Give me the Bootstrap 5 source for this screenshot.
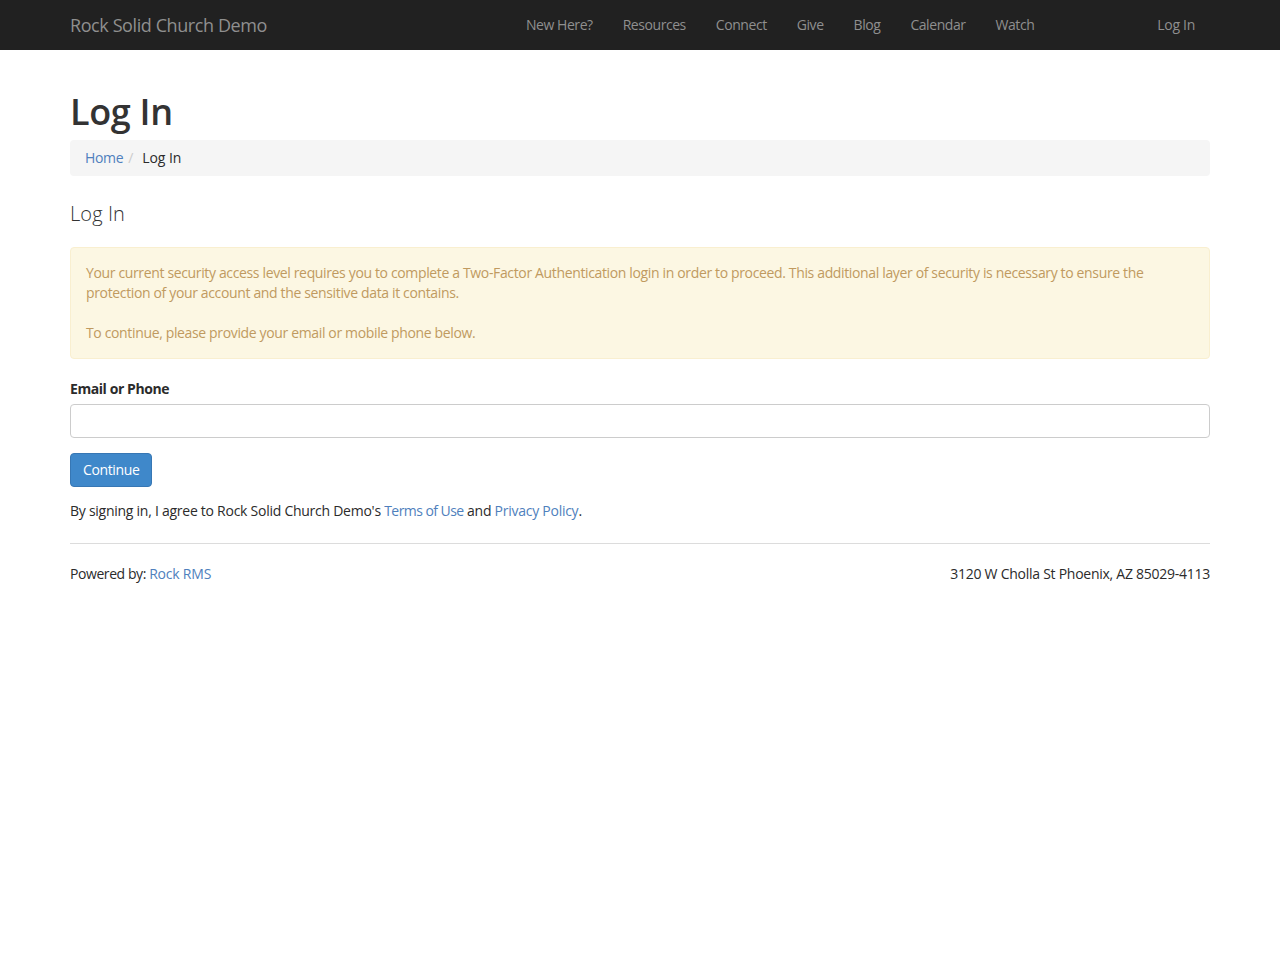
<!DOCTYPE html>
<html lang="en">
<head>
<meta charset="utf-8">
<title>Log In</title>
<link href="https://cdn.jsdelivr.net/npm/bootstrap@5.3.0/dist/css/bootstrap.min.css" rel="stylesheet">
<style>
body { font-family: "Open Sans", sans-serif; font-size: 14px; line-height: 20px; letter-spacing: -0.34px; color: #2b2b2b; background: #fff; }
a { text-decoration: none; color: #4f7fbd; }
.top-bar { background: #212121; height: 50px; padding: 0 70px; }
.top-brand { font-size: 18px; letter-spacing: -0.41px; color: #8f8f8f; font-weight: 400; }
.top-link { color: #8f8f8f; padding: 15px; line-height: 20px; letter-spacing: -0.44px; }
.top-menu { margin-left: 244px; }
.top-login { letter-spacing: -0.3px; }
.page-wrap { padding: 0 70px; }
.page-heading { font-size: 36px; line-height: 40px; font-weight: 600; color: #333; margin: 42px 0 8px; }
.trail { background: #f5f5f5; border-radius: 4px; height: 36px; padding: 8px 15px; }
.trail-sep { color: #ccc; padding: 0 5px; margin-right: 1px; }
.trail-now { letter-spacing: -0.1px; }
.block-title { font-size: 20px; line-height: 22px; letter-spacing: 0.1px; font-weight: 300; color: #333; margin: 27px 0 22px; }
.warn-box { background: #fcf7e3; border: 1px solid #f9efd0; border-radius: 4px; color: #c09a60; padding: 15px; height: 112px; margin-bottom: 20px; letter-spacing: -0.355px; }
.field-label { font-weight: 700; font-size: 14px; line-height: 20px; letter-spacing: -0.43px; margin-bottom: 5px; display: block; color: #2b2b2b; }
.field-box { height: 34px; border: 1px solid #ccc; border-radius: 4px; font-size: 14px; padding: 6px 12px; box-shadow: none; }
.go-btn { background: #3f88ca; border: 1px solid #3777b4; color: #fff; font-size: 14px; line-height: 20px; letter-spacing: -0.37px; padding: 6px 12px; border-radius: 4px; margin-top: 15px; }
.terms-line { margin: 14px 0 22px; letter-spacing: -0.26px; }
.terms-link { letter-spacing: -0.55px; }
.foot-rule { border: 0; border-top: 1px solid #dcdcdc; margin: 0 0 20px; opacity: 1; }
.foot-power { letter-spacing: -0.42px; }
.foot-link { letter-spacing: -0.22px; }
.foot-addr { letter-spacing: -0.26px; }
</style>
</head>
<body>
<nav class="top-bar d-flex align-items-center">
  <a class="top-brand" href="#">Rock Solid Church Demo</a>
  <div class="top-menu d-flex">
    <a class="top-link" href="#">New Here?</a>
    <a class="top-link" href="#">Resources</a>
    <a class="top-link" href="#">Connect</a>
    <a class="top-link" href="#">Give</a>
    <a class="top-link" href="#">Blog</a>
    <a class="top-link" href="#">Calendar</a>
    <a class="top-link" href="#">Watch</a>
  </div>
  <a class="top-link top-login ms-auto" href="#">Log In</a>
</nav>
<main class="page-wrap">
  <h1 class="page-heading">Log In</h1>
  <div class="trail"><a href="#">Home</a><span class="trail-sep">/</span> <span class="trail-now">Log In</span></div>
  <h2 class="block-title">Log In</h2>
  <div class="warn-box">Your current security access level requires you to complete a Two-Factor Authentication login in order to proceed. This additional layer of security is necessary to ensure the protection of your account and the sensitive data it contains.<br><br>To continue, please provide your email or mobile phone below.</div>
  <label class="field-label" for="em">Email or Phone</label>
  <input id="em" class="form-control field-box" type="text">
  <button class="btn go-btn" type="button">Continue</button>
  <p class="terms-line">By signing in, I agree to Rock Solid Church Demo's <a class="terms-link" href="#">Terms of Use</a> and <a href="#">Privacy Policy</a>.</p>
  <hr class="foot-rule">
  <div class="d-flex justify-content-between"><span class="foot-power">Powered by: <a class="foot-link" href="#">Rock RMS</a></span><span class="foot-addr">3120 W Cholla St Phoenix, AZ 85029-4113</span></div>
</main>
<script src="https://cdn.jsdelivr.net/npm/bootstrap@5.3.0/dist/js/bootstrap.bundle.min.js"></script>
</body>
</html>
